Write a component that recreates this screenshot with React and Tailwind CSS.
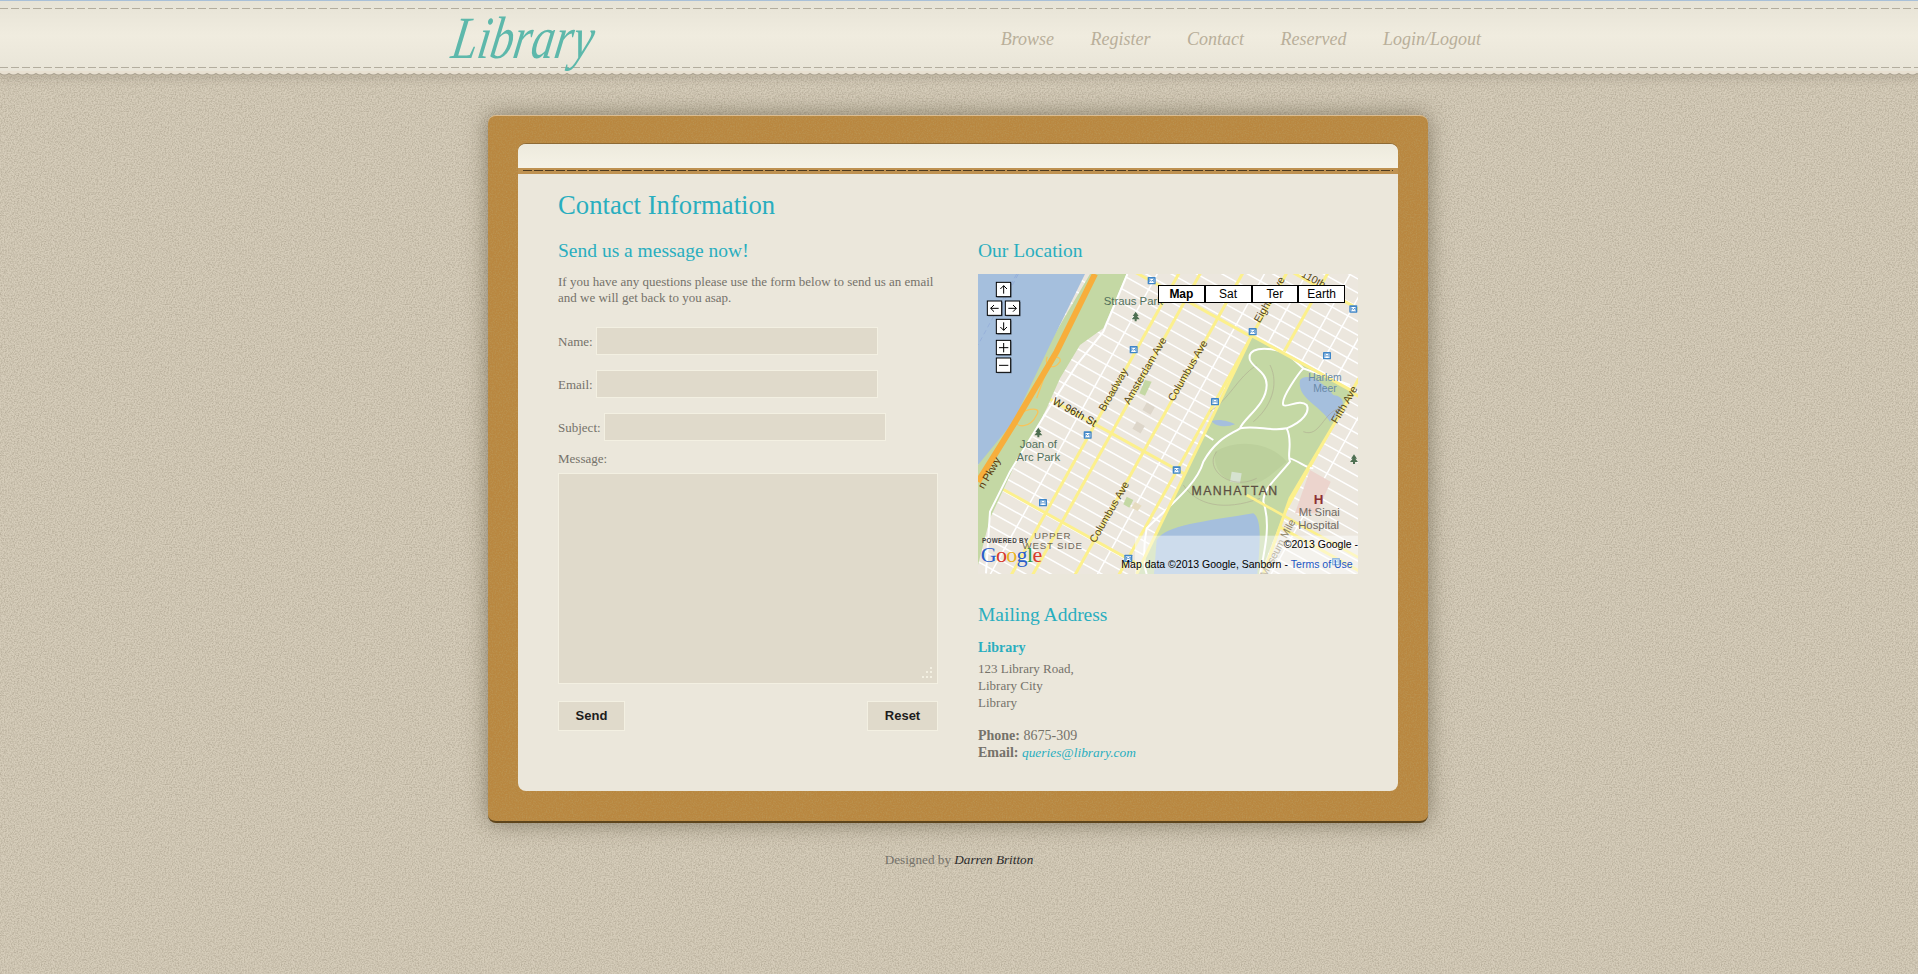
import React from 'react';

const serif = "font-['Liberation_Serif',serif]";
const sans = "font-['Liberation_Sans',Arial,sans-serif]";

const AVENUE_X = 0.874;
const AVENUE_Y = 0.486;

// line across the map, d = offset between avenues
const avenue = (d) => {
  const cx = d * AVENUE_X;
  const cy = d * AVENUE_Y;
  return `M${cx - 1600 * AVENUE_Y},${cy + 1600 * AVENUE_X} L${cx + 1600 * AVENUE_Y},${cy - 1600 * AVENUE_X}`;
};

// line across the map, s = offset between cross streets
const street = (s) => {
  const cx = -s * AVENUE_Y;
  const cy = s * AVENUE_X;
  return `M${cx - 1800 * AVENUE_X},${cy - 1800 * AVENUE_Y} L${cx + 1800 * AVENUE_X},${cy + 1800 * AVENUE_Y}`;
};

const minorAvenues = [504, 785, 895, 1010, 1065, 1125, 1240];
const crossStreets = [];
for (let s = -640; s < 900; s += 37) crossStreets.push(s);

const majorAvenues = [560, 616, 727, 842, 950, 1185];
const majorStreets = [-451, -222, 235, 540];

const metroStops = [
  [545, 47], [491, 254], [848, 200], [1071, 272], [1150, 132], [735, 410],
  [353, 510], [620, 615], [219, 713], [475, 880], [1098, 890],
];

const trees = [[497, 155], [205, 503], [1152, 583]];

const MapTree = ({ x, y }) => (
  <path
    d={`M${x},${y - 15} l9,13 h-5 l8,10 h-9 v6 h-6 v-6 h-9 l8,-10 h-5 z`}
    fill="#4e6f52"
  />
);

const MapButton = ({ x, y, w = 43, h = 43, d }) => (
  <g>
    <rect x={x + 3} y={y + 3} width={w} height={h} fill="#000" opacity="0.35" />
    <rect x={x} y={y} width={w} height={h} fill="#fff" stroke="#000" strokeWidth="3" />
    <path d={d} transform={`translate(${x},${y})`} fill="none" stroke="#000" strokeWidth="3" />
  </g>
);

const MapType = ({ label, active }) => (
  <div
    className={`flex-1 flex items-center justify-center bg-white border border-black text-[12px] leading-none text-black ${sans} ${active ? 'font-bold' : ''}`}
  >
    {label}
  </div>
);

const MapLabel = ({ x, y, rotate, size = 34, fill = '#4d4637', children, ...rest }) => (
  <text
    x={x}
    y={y}
    fontSize={size}
    fill={fill}
    textAnchor="middle"
    dominantBaseline="middle"
    fontFamily="'Liberation Sans', Arial, sans-serif"
    transform={rotate ? `rotate(${rotate} ${x} ${y})` : undefined}
    {...rest}
  >
    {children}
  </text>
);

const MapView = () => (
  <div className="relative w-[380px] h-[300px] overflow-hidden">
    {/* map drawn in 3x units so the numbers read off the zoomed reference */}
    <svg viewBox="24 27 1140 900" className="block w-[380px] h-[300px] bg-[#ece7de]">
      <g fill="none" stroke="#fff" strokeWidth="4.5">
        {minorAvenues.map((d) => <path key={d} d={avenue(d)} />)}
        {crossStreets.map((s) => <path key={s} d={street(s)} />)}
      </g>
      <g fill="none" stroke="#fcf08c" strokeWidth="9">
        {majorAvenues.map((d) => <path key={d} d={avenue(d)} />)}
        {majorStreets.map((s) => <path key={s} d={street(s)} />)}
      </g>
      <rect x="522" y="418" width="28" height="26" transform="rotate(30 536 431)" fill="#ddd6ca" />
      <rect x="492" y="474" width="28" height="26" transform="rotate(30 506 487)" fill="#ddd6ca" />
      <path d="M525,345 L545,350 L525,392 L508,385 Z" fill="#c4d8a4" />
      <path d="M470,695 L490,705 L478,728 L460,718 Z" fill="#c4d8a4" />
      <path d="M495,710 L515,722 L503,738 L484,728 Z" fill="#e6dcc0" />

      {/* river side */}
      <path d="M360,27 L470,27 L400,190 L330,240 L270,340 L230,430 L190,510 L130,610 L60,760 L24,900 L24,600 Z" fill="#c4d8a4" />
      <path d="M24,27 L345,27 L240,240 L130,470 L24,600 Z" fill="#a5bfdd" />
      <path d="M140,27 L24,240 M145,27 L90,130" stroke="#8fa9d8" strokeWidth="2" strokeDasharray="14 10" fill="none" />
      <path d="M472,27 L400,200 L320,300 L230,440 L120,620 L60,740 L48,925" fill="none" stroke="#fff" strokeWidth="6" />
      <path d="M232,275 C220,300 250,320 270,290 C275,270 240,270 232,310 L200,400 M135,465 C150,430 220,420 200,450 C180,490 140,490 135,465" fill="none" stroke="#f8c45a" strokeWidth="4" />
      <path d="M375,27 L260,260 L130,480 L24,650" fill="none" stroke="#f7ae3c" strokeWidth="18" />

      {/* Central Park */}
      <path d="M845,212 L1150,380 L960,700 L870,927 L500,927 Z" fill="#c4d8a4" />
      <path d="M735,560 C800,520 900,530 950,590 C900,630 860,680 790,650 C750,640 730,600 735,560 Z" fill="#bcd09c" />
      <path d="M785,620 L815,625 L810,655 L780,650 Z" fill="#d6e2d0" />
      <path d="M1020,615 L1082,650 L1040,745 L975,745 Z" fill="#ecd4cd" />
      <path d="M560,825 C590,780 700,770 850,745 C875,760 872,830 862,927 L552,927 Z" fill="#a5bfdd" />
      <path d="M990,345 C1010,320 1060,350 1090,390 C1130,395 1130,430 1080,470 C1050,420 980,400 990,345 Z" fill="#a5bfdd" />
      <path d="M725,468 C750,460 780,470 795,478 C770,488 735,485 725,468 Z" fill="#a5bfdd" />
      <g fill="none" stroke="#a99f8c" strokeWidth="2" opacity="0.7">
        <path d="M860,300 C800,340 780,400 720,440 M900,300 C930,360 900,430 850,470" />
        <path d="M1000,500 C1050,520 1060,440 1110,430 M740,560 C700,610 780,680 860,640" />
        <path d="M640,660 C680,720 760,740 870,700" />
      </g>
      <g fill="none" stroke="#fff" strokeWidth="6">
        <path d="M950,265 C880,240 830,250 840,285 C850,310 890,320 890,360 C890,420 820,460 810,490 C780,510 740,520 700,590 C680,660 600,720 530,790 C520,840 520,900 530,927" />
        <path d="M950,265 L1000,310 L1140,360" />
        <path d="M810,490 C860,480 900,500 950,490 C1000,470 1020,440 1010,420 C990,400 950,430 940,420 C930,400 990,320 1000,310" />
        <path d="M950,490 C970,530 950,570 960,590 C920,640 880,670 880,710 C900,770 890,830 870,927" />
        <path d="M960,580 C990,590 1010,610 1030,610 M690,500 L730,525" />
      </g>
      <path d="M845,212 L1150,380 M845,212 L500,927" fill="none" stroke="#fcf08c" strokeWidth="9" />
      <path d="M1150,380 L960,700 L880,927" fill="none" stroke="#fcf08c" strokeWidth="9" />
      <path d="M830,690 L1170,880" fill="none" stroke="#fcf08c" strokeWidth="8" />

      {trees.map(([x, y]) => <MapTree key={x} x={x} y={y} />)}
      {metroStops.map(([x, y]) => (
        <g key={`${x}-${y}`}>
          <rect x={x - 12} y={y - 11} width="24" height="22" rx="2" fill="#3f86c8" />
          <rect x={x - 8} y={y - 6} width="16" height="13" fill="#fff" />
          <path d={`M${x - 6},${y + 5} v-9 l6,6 l6,-6 v9`} fill="none" stroke="#3f86c8" strokeWidth="2.5" />
        </g>
      ))}

      <MapLabel x={490} y={111} fill="#52705b">Straus Park</MapLabel>
      <MapLabel x={527} y={318} rotate={-60} size={32} fill="#5a4a18">Amsterdam Ave</MapLabel>
      <MapLabel x={432} y={375} rotate={-60} size={32} fill="#5a4a18">Broadway</MapLabel>
      <MapLabel x={655} y={318} rotate={-60} size={32} fill="#5a4a18">Columbus Ave</MapLabel>
      <MapLabel x={313} y={443} rotate={29} size={33} fill="#3f3410">W 96th St</MapLabel>
      <MapLabel x={420} y={742} rotate={-60} size={32} fill="#5a4a18">Columbus Ave</MapLabel>
      <MapLabel x={900} y={105} rotate={-60} size={32} fill="#5a4a18">Eighth Ave</MapLabel>
      <MapLabel x={1125} y={420} rotate={-60} size={32} fill="#5a4a18">Fifth Ave</MapLabel>
      <MapLabel x={1030} y={45} rotate={29} size={32} fill="#5a4a18">W 110th St</MapLabel>
      <MapLabel x={60} y={625} rotate={-60} size={32} fill="#5a3808">n Pkwy</MapLabel>
      <MapLabel x={925} y={850} rotate={-62} size={32} fill="#8a8062">Museum Mile</MapLabel>
      <MapLabel x={205} y={541} fill="#52705b">Joan of</MapLabel>
      <MapLabel x={205} y={579} fill="#52705b">Arc Park</MapLabel>
      <MapLabel x={1065} y={340} size={31} fill="#6889a8">Harlem</MapLabel>
      <MapLabel x={1065} y={373} size={31} fill="#6889a8">Meer</MapLabel>
      <MapLabel x={795} y={679} size={37} fill="#5c4f42" letterSpacing="4" stroke="#5c4f42" strokeWidth="0.8">MANHATTAN</MapLabel>
      <MapLabel x={1046} y={706} size={40} fill="#8c2f33" fontWeight="bold">H</MapLabel>
      <MapLabel x={1048} y={745} fill="#6f6a62">Mt Sinai</MapLabel>
      <MapLabel x={1046} y={783} fill="#6f6a62">Hospital</MapLabel>
      <MapLabel x={248} y={815} size={29} fill="#70685a" letterSpacing="2.5">UPPER</MapLabel>
      <MapLabel x={248} y={843} size={29} fill="#70685a" letterSpacing="2.5">WEST SIDE</MapLabel>

      <rect x="495" y="812" width="669" height="115" fill="#fff" opacity="0.45" />

      <text x="36" y="833" fontSize="19" fontWeight="bold" fill="#444" letterSpacing="1" fontFamily="'Liberation Sans', Arial, sans-serif">POWERED BY</text>
      <text x="32" y="892" fontSize="66" fontFamily="'Liberation Serif', serif" letterSpacing="-2">
        <tspan fill="#2a5fc9">G</tspan>
        <tspan fill="#d8392b">o</tspan>
        <tspan fill="#e9b21f">o</tspan>
        <tspan fill="#2a5fc9">g</tspan>
        <tspan fill="#2f9e44">l</tspan>
        <tspan fill="#d8392b">e</tspan>
      </text>
      <text x="1164" y="849" fontSize="31.5" fill="#000" textAnchor="end" fontFamily="'Liberation Sans', Arial, sans-serif">©2013 Google -</text>
      <text x="1148" y="909" fontSize="31.5" fill="#000" textAnchor="end" fontFamily="'Liberation Sans', Arial, sans-serif">
        Map data ©2013 Google, Sanborn - <tspan fill="#1a56c4">Terms of Use</tspan>
      </text>

      <MapButton x={79} y={52} d="M22,34 V10 M12,20 L22,10 L32,20" />
      <MapButton x={52} y={108} d="M34,22 H10 M20,12 L10,22 L20,32" />
      <MapButton x={106} y={108} d="M9,22 H33 M23,12 L33,22 L23,32" />
      <MapButton x={79} y={163} d="M22,9 V33 M12,23 L22,33 L32,23" />
      <MapButton x={79} y={226} d="M22,8 V36 M8,22 H36" />
      <MapButton x={79} y={279} d="M8,22 H36" />
    </svg>

    {/* map type switcher */}
    <div className="absolute left-[180px] top-[11px] w-[187px] h-[18px] flex">
      <MapType label="Map" active />
      <MapType label="Sat" />
      <MapType label="Ter" />
      <MapType label="Earth" />
    </div>
  </div>
);

const NAV = ['Browse', 'Register', 'Contact', 'Reserved', 'Login/Logout'];

const Stitch = () => (
  <div className="h-px bg-[repeating-linear-gradient(90deg,#b3ad9e_0,#b3ad9e_8px,transparent_8px,transparent_11px)]" />
);

const Field = ({ label, className = '' }) => (
  <div className={`flex items-center gap-[3px] ${className}`}>
    <label className="pt-[1px] text-[13px] leading-4 text-[#75726a]">{label}</label>
    <input className="w-[282px] h-[28px] bg-[#e0dacb] border border-[#f3f0e2] outline-none" />
  </div>
);

const FormButton = ({ children, className = '' }) => (
  <button className={`h-[30px] bg-[#e0dacb] border border-[#f3f0e2] text-[13px] font-bold text-[#1c1c1c] ${sans} ${className}`}>
    {children}
  </button>
);

export default function App() {
  return (
    <div className={`min-h-screen flex flex-col bg-[#d6cdba] bg-[url(data:image/svg+xml,%3Csvg%20xmlns=%27http://www.w3.org/2000/svg%27%20width=%27240%27%20height=%27240%27%3E%3Cfilter%20id=%27n%27%3E%3CfeTurbulence%20type=%27fractalNoise%27%20baseFrequency=%27.7%27%20numOctaves=%273%27%20stitchTiles=%27stitch%27/%3E%3CfeColorMatrix%20values=%270%200%200%200%20.42%200%200%200%200%20.37%200%200%200%200%20.28%200%200%200%201.5%20-.52%27/%3E%3C/filter%3E%3Crect%20width=%27240%27%20height=%27240%27%20filter=%27url%28%23n%29%27/%3E%3C/svg%3E)] ${serif}`}>
      {/* Header */}
      <header className="shrink-0 h-[76px] shadow-[0_3px_8px_rgba(90,80,60,0.18)]">
        <div className="h-[71px] border-t border-[#a9c0d8] bg-gradient-to-b from-[#e7e3d6] via-[#f0ecdf] to-[#e9e5d8] pt-[7px]">
          <Stitch />
          <div className="h-[58px] w-[1044px] mx-auto pl-[16px] flex items-center justify-between">
            <span className="inline-block origin-left scale-x-[0.77] -skew-x-12 text-[60px] leading-none italic text-[#5db8ab]">Library</span>
            <nav className="flex items-center gap-[36.5px] pt-[1px]">
              {NAV.map((item) => (
                <a key={item} className="text-[18px] leading-none italic text-[#b9af9a]">{item}</a>
              ))}
            </nav>
          </div>
          <Stitch />
        </div>
        <div className="h-[5px] bg-[#e8e0d1] bg-[radial-gradient(circle_at_4.5px_-3px,#e8e0d1_6px,#a89f8e_7px,#c4baa5_8px)] bg-[length:9px_5px]" />
      </header>

      {/* Card */}
      <main className="mt-[39px] w-[940px] ml-[488px]">
        <div className="h-[708px] rounded-lg border-t border-[#dcbd90] border-b-2 border-b-[#5e451c] bg-[#b98740] bg-[url(data:image/svg+xml,%3Csvg%20xmlns=%27http://www.w3.org/2000/svg%27%20width=%27240%27%20height=%27240%27%3E%3Cfilter%20id=%27c%27%3E%3CfeTurbulence%20type=%27fractalNoise%27%20baseFrequency=%27.7%27%20numOctaves=%273%27%20stitchTiles=%27stitch%27/%3E%3CfeColorMatrix%20values=%270%200%200%200%20.5%200%200%200%200%20.32%200%200%200%200%20.1%200%200%200%201.4%20-.55%27/%3E%3C/filter%3E%3Crect%20width=%27240%27%20height=%27240%27%20filter=%27url%28%23c%29%27/%3E%3C/svg%3E)] shadow-[0_0_22px_rgba(70,58,36,0.55)] px-[30px] pt-[27px]">
          <div className="h-[648px] rounded-lg overflow-hidden bg-[#ebe7db] border-t border-[#8e6a34]">
            <div className="h-[24px] bg-gradient-to-b from-[#edeadd] to-[#f5f2e6]" />
            <div className="h-[6px] bg-[#bf9251] pt-[2px] px-[5px]">
              <div className="h-px bg-[repeating-linear-gradient(90deg,#4d3a1e_0,#4d3a1e_9px,transparent_9px,transparent_11px)]" />
            </div>

            <div className="pl-[40px] pt-[14px]">
              <h1 className="h-[34px] text-[26.7px] leading-[34px] text-[#29aebf]">Contact Information</h1>

              <div className="mt-[17px] flex gap-[40px]">
                {/* Form */}
                <section className="w-[380px]">
                  <h2 className="h-[24px] text-[19.5px] leading-6 text-[#29aebf]">Send us a message now!</h2>
                  <p className="mt-[11px] text-[13px] leading-4 text-[#75726a]">
                    If you have any questions please use the form below to send us an email and we will get back to you asap.
                  </p>
                  <Field label="Name:" className="mt-[21px]" />
                  <Field label="Email:" className="mt-[15px]" />
                  <Field label="Subject:" className="mt-[15px]" />
                  <label className="block mt-[10px] text-[13px] leading-4 text-[#75726a]">Message:</label>
                  <div className="relative mt-[6px]">
                    <textarea className="block w-[380px] h-[211px] resize-none bg-[#e0dacb] border border-[#f3f0e2] outline-none" />
                    {/* resize grip */}
                    <svg viewBox="0 0 12 12" className="absolute right-[5px] bottom-[5px] w-[12px] h-[12px] fill-[#f3f0e2]">
                      <rect x="9" y="0" width="2" height="2" />
                      <rect x="5" y="4" width="2" height="2" />
                      <rect x="9" y="4" width="2" height="2" />
                      <rect x="1" y="9" width="2" height="2" />
                      <rect x="5" y="9" width="2" height="2" />
                      <rect x="9" y="9" width="2" height="2" />
                    </svg>
                  </div>
                  <div className="mt-[17px] flex justify-between">
                    <FormButton className="w-[67px]">Send</FormButton>
                    <FormButton className="w-[71px]">Reset</FormButton>
                  </div>
                </section>

                {/* Location */}
                <section className="w-[380px]">
                  <h2 className="h-[24px] text-[19.5px] leading-6 text-[#29aebf]">Our Location</h2>
                  <div className="mt-[11px]">
                    <MapView />
                  </div>
                  <h2 className="mt-[29px] h-[24px] text-[19.5px] leading-6 text-[#29aebf]">Mailing Address</h2>
                  <p className="mt-[13px] text-[14px] leading-4 font-bold text-[#29aebf]">Library</p>
                  <p className="mt-[4px] text-[13px] leading-[17px] text-[#75726a]">
                    123 Library Road,<br />Library City<br />Library
                  </p>
                  <p className="mt-[16px] text-[14px] leading-[17px] text-[#75726a]">
                    <strong className="font-bold">Phone:</strong> 8675-309<br />
                    <strong className="font-bold">Email:</strong> <a className="italic text-[13.4px] text-[#29aebf]">queries@library.com</a>
                  </p>
                </section>
              </div>
            </div>
          </div>
        </div>
      </main>

      <footer className="mt-[29px] pb-[100px] text-center text-[13.2px] leading-4 text-[#75726a]">
        Designed by <em className="italic text-[#2b2b2b]">Darren Britton</em>
      </footer>
    </div>
  );
}
